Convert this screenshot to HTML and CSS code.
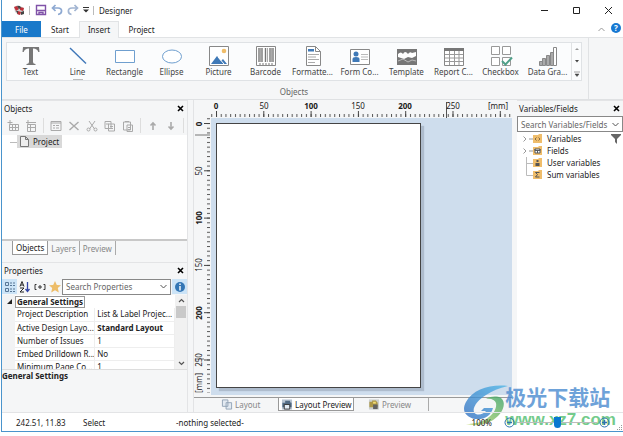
FILE: index.html
```html
<!DOCTYPE html>
<html lang="en">
<head>
<meta charset="utf-8">
<title>Designer</title>
<link rel="stylesheet" href="styles.css">
</head>
<body>
<div class="app">
  <header class="titlebar">
    <svg class="logo" width="12" height="12" viewBox="0 0 12 12"><path d="M1 3l4-2 6 3v5l-5 2-4-3z" fill="#ccc"/><path d="M1 3l3-1 2 3-3 2zM7 3l4 1-1 3-3-1zM5 7l3 1-1 3-3-1z" fill="#c0303a"/><path d="M4 2l3 0 1 2-2 1zM3 7l2 0 0 3zM8 8l3-1v3l-3 1z" fill="#444"/></svg>
    <span class="bar"></span>
    <button aria-label="Save"><svg width="12" height="12" viewBox="0 0 12 12" fill="none" stroke="#8052a8" stroke-width="1.4"><path d="M1.500 1.500h9v9h-9zM2 6.500h8M4 10.500V8.500h4v2"/></svg></button>
    <button class="undo" aria-label="Undo"><svg width="12" height="12" viewBox="0 0 12 12" fill="none" stroke="#8ea9d2" stroke-width="1.700"><path d="M4.500 1L1.500 4l3 3M2 4h5c5 0 4.500 6 0 6.500"/></svg></button>
    <button class="undo" aria-label="Redo"><svg width="12" height="12" viewBox="0 0 12 12" fill="none" stroke="#a2b5d2" stroke-width="1.700"><path d="M7.500 1l3 3-3 3M10 4H5C0 4 .5 10 4.500 10.500"/></svg></button>
    <button class="more" aria-label="Customize"><svg width="6" height="6" viewBox="0 0 6 6"><path d="M0 0h6v1H0zM0 2.500h6L3 5.500z" fill="#333"/></svg></button>
    <span class="bar"></span>
    <h1>Designer</h1>
    <div class="winbtns">
      <button aria-label="Minimize"><svg width="9" height="9" viewBox="0 0 9 9"><path d="M1 4.500h7" stroke="#222"/></svg></button>
      <button aria-label="Maximize"><svg width="9" height="9" viewBox="0 0 9 9"><path d="M1.500 1.500h6v6h-6z" fill="none" stroke="#222"/></svg></button>
      <button aria-label="Close"><svg width="9" height="9" viewBox="0 0 9 9"><path d="M1 1l7 7M8 1L1 8" stroke="#222"/></svg></button>
    </div>
  </header>

  <nav class="tabs">
    <button class="file">File</button><button>Start</button><button class="current">Insert</button><button>Project</button>
    <span class="grow"></span>
    <button class="collapse" aria-label="Collapse ribbon"><svg width="7" height="5" viewBox="0 0 7 5"><path d="M.5 4l3-3 3 3" fill="none" stroke="#999"/></svg></button>
    <button class="help" aria-label="Help">?</button>
  </nav>

  <section class="ribbon">
    <div class="group">
      <div class="gallery">
        <button><svg viewBox="0 0 20 20"><path d="M2 1h16l.5 5h-1.200Q16.500 2.500 12 2.500V16q0 2 2.500 2v1h-9v-1Q8 18 8 16V2.500Q3.500 2.500 2.700 6H1.500z" fill="#777"/></svg>Text</button>
        <button><svg viewBox="0 0 20 20"><path d="M2 2l16 15.500" stroke="#3e76b8" stroke-width="1.400"/></svg>Line</button>
        <button><svg viewBox="0 0 20 20"><path d="M.5 4.500h19v12H.5z" fill="#fff" stroke="#6f9fcf"/></svg>Rectangle</button>
        <button><svg viewBox="0 0 20 20"><ellipse cx="10" cy="10.500" rx="9.500" ry="6.500" fill="#fff" stroke="#6f9fcf"/></svg>Ellipse</button>
        <button><svg viewBox="0 0 20 20"><path d="M.5.5h19v19H.5z" fill="#fff" stroke="#888"/><circle cx="15" cy="5" r="2.300" fill="#f0bd69"/><path d="M2 18l6-8 4 5 2-2 4 5z" fill="#3f79b7"/><path d="M9 11l6 7" stroke="#fff"/></svg>Picture</button>
        <button><svg viewBox="0 0 20 20"><path d="M.5.5h19v19H.5z" fill="#fff" stroke="#888"/><path d="M3 2v14M6 2v14M9.500 2v14M14 2v14M17 2v14" stroke="#777" stroke-width="1.400"/><path d="M4.500 2v14M11.500 2v14M15.500 2v14" stroke="#aaa"/><path d="M3 18h15" stroke="#777" stroke-dasharray="2 1"/></svg>Barcode</button>
        <button><svg viewBox="0 0 20 20"><path d="M3.500.5h9l5 5v14h-14z" fill="#fff" stroke="#888"/><path d="M12.500.5v5h5" fill="none" stroke="#888"/><path d="M5 3h6v2.500H5z" fill="#3f79b7"/><path d="M5 8.500h11M5 11h8M5 13.500h11M5 16.500h7" stroke="#aaa"/></svg>Formatte...</button>
        <button><svg viewBox="0 0 20 20"><path d="M.5 3.500h19v15H.5z" fill="#fff" stroke="#888"/><circle cx="6" cy="8" r="2.500" fill="#3f79b7"/><path d="M2.500 16v-3q0-2 3.500-2t3.500 2v3z" fill="#3f79b7"/><path d="M11 8.500h7M11 11h7M11 13.500h7" stroke="#bbb"/></svg>Form Co...</button>
        <button><svg viewBox="0 0 20 20"><path d="M0 3h20v16H0z" fill="#777"/><path d="M1 11V8q3-3 5 0 2-4 5 0 2-3 4-1l4-1v4l-4 2-4-1-4 2z" fill="#fff"/><path d="M1 15l5-2 5 3 4-2 4 1" stroke="#bbb" fill="none"/></svg>Template</button>
        <button><svg viewBox="0 0 20 20"><path d="M.5 2.500h19v17H.5z" fill="#fff" stroke="#888"/><path d="M0 2h20v3H0z" fill="#777"/><path d="M1 8.500h18M1 12h18M1 15.500h18M5.500 5v14M10.500 5v14M15 5v14" stroke="#999"/></svg>Report C...</button>
        <button><svg viewBox="0 0 20 20"><path d="M.5.500h8v8h-8zM11.500.5h8v8h-8zM.5 11.500h8v8h-8zM11.500 11.500h8v8h-8z" fill="#fff" stroke="#999"/><path d="M11 15l3.500 3.500L21 11.500" fill="none" stroke="#4fa089" stroke-width="2"/></svg>Checkbox</button>
        <button><svg viewBox="0 0 20 20"><path d="M1.500 15.500h3v4h-3zM4.500 12.500h3v7h-3zM8.500 9.500h3v10h-3zM12.500 6.500h3v13h-3z" fill="#aaa" stroke="#888"/><path d="M15.500 1.500h3v18h-3z" fill="#fff" stroke="#888"/></svg>Data Gra...</button>
        <div class="scroller">
          <button aria-label="Up"><svg viewBox="0 0 6 6"><path d="M1 4l2-2 2 2z" fill="#999"/></svg></button>
          <button aria-label="Down"><svg viewBox="0 0 6 6"><path d="M1 2h4L3 4.500z" fill="#444"/></svg></button>
          <button aria-label="Expand"><svg viewBox="0 0 6 6"><path d="M0 1h6M1 3h4L3 5.500z" fill="#444" stroke="#444" stroke-width=".5"/></svg></button>
        </div>
      </div>
      <span class="caption">Objects</span>
    </div>
  </section>

  <main class="work">
    <div class="left">
      <section class="panel objects">
        <h2>Objects<button aria-label="Close panel"><svg width="7" height="7" viewBox="0 0 7 7"><path d="M1 1l5 5M6 1L1 6" stroke="#000" stroke-width="1.600"/></svg></button></h2>
        <div class="tools">
          <button aria-label="Insert table"><svg viewBox="0 0 12 12"><path d="M2.500 4.500h9v6h-9zM2 7.500h9M5.500 5v6M8.500 5v6M3 0v5M.5 2.500h5"/></svg></button>
          <button aria-label="Append table"><svg viewBox="0 0 12 12"><path d="M2.500 4.500h8v7h-8zM2 7.500h9M5.500 5v6M1 2.500h10M3 0v5"/></svg></button>
          <i></i>
          <button aria-label="Properties"><svg viewBox="0 0 12 12"><path d="M1 1.500h10v9H1zM1 3h10M3 5.500h2M6 5.500h3M3 8h2M6 8h3"/></svg></button>
          <button aria-label="Delete"><svg viewBox="0 0 12 12"><path d="M1.500 2l9 8M10.500 2l-9 8" stroke-width="1.400"/></svg></button>
          <button aria-label="Cut"><svg viewBox="0 0 12 12"><path d="M3 1l5.500 8M9 1L3.500 9"/><circle cx="2.500" cy="9.500" r="1.500"/><circle cx="9.500" cy="9.500" r="1.500"/></svg></button>
          <button aria-label="Copy"><svg viewBox="0 0 12 12"><path d="M1 1.500h6v7H1zM4.500 4h6v7h-6zM2 4h3M6 6.500h3M6 8.500h3"/></svg></button>
          <button aria-label="Paste"><svg viewBox="0 0 12 12"><path d="M1.500 2h7v8h-7zM5 5h5.500v6.500H5zM3 1.500h4M6 7.500h3M6 9.500h3"/></svg></button>
          <i></i>
          <button aria-label="Move up"><svg viewBox="0 0 12 12"><path d="M6 10V3M3.500 5.500L6 3l2.500 2.500" stroke-width="1.600"/></svg></button>
          <button aria-label="Move down"><svg viewBox="0 0 12 12"><path d="M6 2v7M3.500 6.500L6 9l2.500-2.500" stroke-width="1.600"/></svg></button>
          <i></i>
        </div>
        <div class="tree"><span class="branch"></span><button class="node"><svg width="9" height="11" viewBox="0 0 9 11"><path d="M.5.5h5l3 3v7h-8zM5.500.5v3h3" fill="#eee" stroke="#777"/></svg>Project</button></div>
        <div class="subtabs"><button class="current">Objects</button><button>Layers</button><button>Preview</button></div>
      </section>

      <section class="panel props">
        <h2>Properties<button aria-label="Close panel"><svg width="7" height="7" viewBox="0 0 7 7"><path d="M1 1l5 5M6 1L1 6" stroke="#000" stroke-width="1.600"/></svg></button></h2>
        <div class="filter">
          <button class="on" aria-label="Categorized"><svg viewBox="0 0 12 12" fill="none" stroke="#587796"><path d="M1.500 1.500h3v3h-3zM1.500 7.500h3v3h-3zM6 2h2M9 2h2M6 4.500h2M9 4.500h2M6 8h2M9 8h2M6 10.500h2M9 10.500h2"/></svg></button>
          <button aria-label="Sort alphabetically"><svg viewBox="0 0 12 12" fill="none" stroke="#222"><path d="M1 5.500l2-5 2 5M2 4h2M1 7h4l-4 4h4"/><path d="M8.500 1v9M6.500 8l2 2.500 2-2.500" stroke="#3345a5" stroke-width="1.300"/></svg></button>
          <button aria-label="Expand all"><svg viewBox="0 0 12 12" fill="none" stroke="#333"><path d="M2.500 3.500H1v5h1.500M9.500 3.500H11v5H9.500M4 6h4M6 4v4"/></svg></button>
          <button aria-label="Favorites"><svg viewBox="0 0 12 12"><path d="M6 0l1.800 4 4.200.3-3.200 2.800 1 4.400L6 9.200l-3.800 2.300 1-4.400L0 4.300 4.200 4z" fill="#edbd69"/></svg></button>
          <div class="combo"><input aria-label="Search Properties" placeholder="Search Properties"><svg width="7" height="5" viewBox="0 0 7 5"><path d="M.5 1l3 3 3-3" fill="none" stroke="#555"/></svg></div>
          <button class="on info" aria-label="Description"><svg viewBox="0 0 12 12"><circle cx="6" cy="6" r="5" fill="#3376b5"/><path d="M6 2.500v1.500M6 5v4.500" stroke="#fff" stroke-width="1.400"/></svg></button>
        </div>
        <div class="sheet">
          <table>
            <tr><td class="gut"><svg width="5" height="5" viewBox="0 0 5 5"><path d="M5 0v5H0z" fill="#222"/></svg></td><th colspan="2"><span>General Settings</span></th></tr>
            <tr><td class="gut"></td><td>Project Description</td><td>List &amp; Label Projec...</td></tr>
            <tr><td class="gut"></td><td>Active Design Layo...</td><td><b>Standard Layout</b></td></tr>
            <tr><td class="gut"></td><td>Number of Issues</td><td>1</td></tr>
            <tr><td class="gut"></td><td>Embed Drilldown R...</td><td>No</td></tr>
            <tr><td class="gut"></td><td>Minimum Page Co...</td><td>1</td></tr>
          </table>
          <div class="vscroll"><svg width="7" height="5" viewBox="0 0 7 5"><path d="M1 4l2.500-2.500L6 4" fill="none" stroke="#555" stroke-width="1.200"/></svg><span></span><svg width="7" height="5" viewBox="0 0 7 5"><path d="M1 1l2.500 2.500L6 1" fill="none" stroke="#555" stroke-width="1.200"/></svg></div>
        </div>
        <p class="desc">General Settings</p>
      </section>
    </div>

    <section class="center">
      <svg class="hruler" width="100%" height="18">
        <defs>
          <pattern id="hm" x="22" y="0" width="4.730" height="18" patternUnits="userSpaceOnUse"><path d="M.5 14v3" stroke="#555"/></pattern>
          <pattern id="hM" x="22" y="0" width="47.300" height="18" patternUnits="userSpaceOnUse"><path d="M.5 11v6" stroke="#444"/></pattern>
        </defs>
        <rect x="17" width="100%" height="18" fill="url(#hm)"/><rect x="17" width="100%" height="18" fill="url(#hM)"/>
        <path d="M252.500 2v16" stroke="#555"/>
        <g text-anchor="middle"><text class="b" x="22" y="9">0</text><text x="70" y="9">50</text><text class="b" x="117" y="9">100</text><text x="164" y="9">150</text><text class="b" x="211" y="9">200</text><text x="259" y="9">250</text><text x="304" y="9">[mm]</text></g>
      </svg>
      <div class="stage">
        <svg class="vruler" width="17" height="100%">
          <defs>
            <pattern id="vm" x="0" y="5" width="17" height="4.730" patternUnits="userSpaceOnUse"><path d="M13 .5h3" stroke="#555"/></pattern>
            <pattern id="vM" x="0" y="5" width="17" height="47.300" patternUnits="userSpaceOnUse"><path d="M10 .5h6" stroke="#444"/></pattern>
          </defs>
          <rect width="17" height="275" fill="url(#vm)"/><rect width="17" height="275" fill="url(#vM)"/>
          <path d="M1 17h15M1 241h9" stroke="#777"/>
          <g text-anchor="middle"><text class="b" transform="translate(8 6) rotate(-90)">0</text><text transform="translate(8 53) rotate(-90)">50</text><text class="b" transform="translate(8 100) rotate(-90)">100</text><text transform="translate(8 147) rotate(-90)">150</text><text class="b" transform="translate(8 195) rotate(-90)">200</text><text transform="translate(8 242) rotate(-90)">250</text><text transform="translate(8 265) rotate(-90)">[mm]</text></g>
        </svg>
        <div class="canvas"><div class="sheetpage"></div></div>
      </div>
      <div class="viewtabs">
        <button><svg viewBox="0 0 12 12"><path d="M1 1h6v7H1zM5 4h6v7H5z" fill="#e3eaf2" stroke="#91a2b5"/></svg>Layout</button>
        <button class="current"><svg viewBox="0 0 12 12"><path d="M.5.5h11v11H.5z" fill="#b9c5d2"/><path d="M1 4h3V2h5l1 2h1v5H1z" fill="#526b84"/><path d="M3 6h6v5H3z" fill="#e4edf6" stroke="#333"/></svg>Layout Preview</button>
        <button><svg viewBox="0 0 12 12"><path d="M.5.5h11v11H.5z" fill="#ccd0cf"/><path d="M1 3h3V1.500h4L10 4v5H1z" fill="#ad9745"/><path d="M5 6h5v5H5z" fill="#626262"/><path d="M5 3h3v2H5z" fill="#f2dd75"/></svg>Preview</button>
      </div>
    </section>

    <aside class="right">
      <h2>Variables/Fields<button aria-label="Close panel"><svg width="7" height="7" viewBox="0 0 7 7"><path d="M1 1l5 5M6 1L1 6" stroke="#000" stroke-width="1.600"/></svg></button></h2>
      <div class="combo"><input aria-label="Search Variables/Fields" placeholder="Search Variables/Fields"><svg width="7" height="5" viewBox="0 0 7 5"><path d="M.5 1l3 3 3-3" fill="none" stroke="#555"/></svg></div>
      <ul>
        <li><svg width="26" height="12" viewBox="0 0 26 12"><path d="M2.500 3.500l2.500 2.500-2.500 2.500M8 6h4" fill="none" stroke="#999"/><path d="M12 2h5l1-1h3v9h-9z" fill="#efbd6b"/><path d="M15.500 4.500L14 6l1.500 1.500M17.500 4.500L19 6l-1.500 1.500" fill="none" stroke="#856a42"/></svg>Variables<button aria-label="Filter"><svg width="10" height="10" viewBox="0 0 10 10"><path d="M0 0h10v1L6 5v5L4 8V5L0 1z" fill="#666"/></svg></button></li>
        <li><svg width="26" height="12" viewBox="0 0 26 12"><path d="M2.500 3.500l2.500 2.500-2.500 2.500M8 6h4" fill="none" stroke="#999"/><path d="M12 2h5l1-1h3v9h-9z" fill="#efbd6b"/><path d="M14 4h5v4h-5z" fill="#fff"/><path d="M14 4h5v1.500h-5zM14 4v4h5V4M16.500 5v3" fill="none" stroke="#55595f"/></svg>Fields</li>
        <li><svg width="26" height="12" viewBox="0 0 26 12"><path d="M5.500 0v12M5 6.500h7" fill="none" stroke="#bbb"/><path d="M12 2h5l1-1h3v9h-9z" fill="#efbd6b"/><path d="M15.500 3h2v2h-2zM14.500 6h4v3h-4z" fill="#555"/></svg>User variables</li>
        <li><svg width="26" height="12" viewBox="0 0 26 12"><path d="M5.500 0v6.500H12" fill="none" stroke="#bbb"/><path d="M12 2h5l1-1h3v9h-9z" fill="#efbd6b"/><path d="M18.500 3.500h-4l2 2-2 2.500h4" fill="none" stroke="#555"/></svg>Sum variables</li>
      </ul>
    </aside>
  </main>

  <footer class="status">
    <span class="pos">242.51, 11.83</span><span class="mode">Select</span><span class="sel">-nothing selected-</span>
    <span class="pct">100%</span>
    <button aria-label="Zoom out"><svg width="11" height="11" viewBox="0 0 11 11" fill="none" stroke="#2e73ae"><circle cx="5.500" cy="5.500" r="4.500"/><path d="M3 5.500h5" stroke-width="1.500"/></svg></button>
    <input type="range" aria-label="Zoom">
    <button aria-label="Zoom in"><svg width="11" height="11" viewBox="0 0 11 11" fill="none" stroke="#2e73ae"><circle cx="5.500" cy="5.500" r="4.500"/><path d="M3 5.500h5M5.500 3v5" stroke-width="1.500"/></svg></button>
    <svg class="grip" width="7" height="7" viewBox="0 0 7 7"><path d="M5 1h1v1H5zM3 3h1v1H3zM5 3h1v1H5zM1 5h1v1H1zM3 5h1v1H3zM5 5h1v1H5z" fill="#999"/></svg>
  </footer>
</div>

<div class="watermark">
  <svg width="46" height="42" viewBox="0 0 46 42">
    <defs><linearGradient id="wb" x1="0" y1="1" x2="1" y2="0"><stop offset="0" stop-color="#326fc1"/><stop offset="1" stop-color="#51b8e8"/></linearGradient><linearGradient id="wg" x1="0" y1="1" x2="1" y2="0"><stop offset="0" stop-color="#c4d86a"/><stop offset="1" stop-color="#3da568"/></linearGradient></defs>
    <path d="M45 1C28-1 10 4 3 17c-5 9 0 15 9 17 9 1 16-3 18-11h-9l-3 3h5c-3 4-10 5-12 1-2-5 5-13 12-17C29 6 36 3 45 1z" fill="url(#wb)"/>
    <path d="M23 14c5-3 11-3 15-1 5 4 3 12-3 18-8 8-20 11-32 8 9 0 17-2 23-7 5-4 8-9 7-14-1-3-5-5-10-4z" fill="url(#wg)"/>
  </svg>
  <div><strong lang="zh">极光下载站</strong><span>www.xz7.com</span></div>
</div>
</body>
</html>
```
FILE: styles.css
```css
* { box-sizing: border-box; }
body { margin: 0; background: #fff; color: #222; font: 8px/13px "Noto Sans", "Open Sans", sans-serif; overflow: hidden; }
button { border: 0; padding: 0; margin: 0; background: none; color: inherit; font: inherit; }
svg { display: block; flex: none; }
h1, h2, p, ul { margin: 0; padding: 0; font: inherit; }
input { font: inherit; }
.app { display: flex; flex-direction: column; height: calc(100vh - 4px); margin-left: 1px; border-left: 1px solid #4a94cc; border-bottom: 1px solid #4a94cc; }
.grow { flex: 1; }

.titlebar { display: flex; align-items: center; height: 20px; padding: 0 10px 0 11px; flex: none; }
.titlebar .bar { width: 1px; height: 9px; margin: 0 5px 0 4px; background: #bbb; }
.titlebar .undo { margin-left: 4px; }
.titlebar .more { margin-left: 4px; }
.titlebar h1 { flex: 1; }
.winbtns { display: flex; gap: 23px; }

.tabs { display: flex; height: 17px; flex: none; align-items: stretch; border-bottom: 1px solid #e1e3e5; margin-top: 1px; }
.tabs button { width: 38px; height: 16px; }
.tabs .file { width: 39px; background: #1979ca; color: #fff; }
.tabs .current { width: 40px; background: #f5f6f7; height: 17px; border: 1px solid #e1e3e5; border-bottom: 0; line-height: 14px; }
.tabs button:nth-child(4) { width: 45px; }
.tabs .collapse { width: 8px; margin-right: 6px; display: grid; place-items: center; }
.tabs .help { width: 10px; height: 10px; margin: 2px 2px 0 0; border-radius: 50%; background: #1678d2; color: #fff; font-weight: bold; line-height: 10px; }

.ribbon { display: flex; flex: none; height: 62px; background: #f5f6f7; border-bottom: 1px solid #dfe1e3; }
.group { display: flex; flex-direction: column; padding: 4px 6px 0 4px; border-right: 1px solid #e0e2e4; }
.gallery { display: flex; height: 43px; background: #fbfcfd; border: 1px solid #dfe2e5; }
.gallery > button { display: flex; flex-direction: column; align-items: center; width: 47px; padding-top: 3px; line-height: 12px; white-space: nowrap; color: #444; }
.gallery > button:nth-child(2) { background: linear-gradient(#bbb, #bbb) 50% 100% / 10px 1px no-repeat; }
.gallery > button svg { width: 20px; height: 20px; overflow: visible; }
.scroller { display: flex; flex-direction: column; width: 10px; border-left: 1px solid #e0e2e4; }
.scroller button { flex: 1; display: grid; place-items: center; }
.scroller svg { width: 6px; height: 6px; }
.caption { text-align: center; padding-top: 4px; line-height: 14px; color: #666; }

.work { display: grid; grid-template-columns: 186px minmax(0, 1fr) 106px; flex: 1; min-height: 0; background: #f5f6f7; }
.left { display: flex; flex-direction: column; min-height: 0; border-right: 1px solid #e3e4e6; }
h2 { display: flex; justify-content: space-between; align-items: center; height: 15px; padding: 0 3px 0 2px; flex: none; }
.objects { display: flex; flex-direction: column; height: 162px; border-top: 1px solid #e3e4e6; flex: none; }
.tools { display: flex; align-items: center; height: 19px; flex: none; padding-left: 5px; gap: 6px; }
.tools svg { width: 12px; height: 12px; fill: none; stroke: #aaa; }
.tools i { width: 1px; height: 15px; background: #ddd; }
.tree { flex: 1; display: flex; align-items: flex-start; background: #fff; padding-left: 8px; border-bottom: 2px solid #c8c8c8; }
.branch { width: 7px; height: 1px; margin-top: 7px; background: #bbb; }
.node { display: flex; align-items: center; gap: 4px; height: 13px; padding: 0 3px; background: #d9d9d9; }
.subtabs { display: flex; height: 21px; flex: none; padding-left: 10px; align-items: flex-start; color: #888; }
.subtabs button { height: 14px; padding: 0 3px; border-right: 1px solid #aaa; }
.subtabs .current { background: #fff; color: #222; border: 1px solid #999; border-top: 0; }
.props { display: flex; flex-direction: column; flex: 1; min-height: 0; border-top: 1px solid #e3e4e6; }
.filter { display: flex; height: 17px; flex: none; align-items: center; }
.filter > button { display: grid; place-items: center; width: 15px; height: 15px; }
.filter > button svg { width: 12px; height: 12px; }
.filter .on { background: #cce4f7; }
.combo { display: flex; align-items: center; height: 16px; border: 1px solid #888; background: #fff; padding-right: 3px; flex: none; }
.combo input { flex: 1; width: 0; min-width: 0; padding: 0 3px; border: 0; background: none; outline: 0; }
.combo input::placeholder { color: #666; opacity: 1; }
.filter .combo { flex: 1; margin-right: 1px; }
.sheet { display: flex; flex: 1; min-height: 0; overflow: hidden; background: #fff; border-bottom: 1px solid #ddd; }
table { flex: 1; align-self: flex-start; table-layout: fixed; width: 0; border-collapse: collapse; }
td, th { height: 13px; padding: 0 0 0 2px; line-height: 12px; border-bottom: 1px solid #eee; border-right: 1px solid #eee; text-align: left; white-space: nowrap; overflow: hidden; }
td:nth-child(2) { width: 79px; }
.gut { width: 13px; background: #f2f3f4; padding-left: 5px; border: 0; }
th { padding-left: 0; border: 0; }
th span { display: inline-block; padding: 0 1px; border: 1px solid #999; line-height: 10px; }
.vscroll { width: 12px; display: flex; flex-direction: column; align-items: center; justify-content: space-between; background: #f1f1f1; padding: 3px 0; }
.vscroll span { width: 10px; height: 12px; background: #c9c9c9; margin: 3px 0 auto; }
.desc { height: 42px; flex: none; font-weight: bold; line-height: 12px; }

.center { display: flex; flex-direction: column; min-width: 0; min-height: 0; margin: 0 5px; border-left: 1px solid #e2e3e5; }
.hruler, .vruler { flex: none; }
.center text { font-size: 8px; fill: #222; }
.center text.b { font-weight: bold; }
.stage { flex: 1; display: flex; min-height: 0; }
.canvas { flex: 1; min-width: 0; background: #cedded; padding: 5px; }
.sheetpage { height: calc(100% - 2px); width: 70.5%; background: #fff; border: 1px solid #444; box-shadow: 3px 3px 1px #aebccd; }
.viewtabs { display: flex; height: 15px; flex: none; border-top: 1px solid #999; color: #888; margin-top: 2px; }
.viewtabs button { display: flex; align-items: center; gap: 2px; height: 13px; padding-left: 14px; }
.viewtabs button:first-child { width: 84px; padding-left: 27px; }
.viewtabs button:last-child { width: 75px; border-right: 1px solid #aaa; }
.viewtabs .current { width: 76px; padding-left: 2px; background: #fff; color: #222; border: 1px solid #999; border-top: 0; }
.viewtabs svg { width: 12px; height: 11px; }
.right { background: #fff; border-top: 1px solid #e3e4e6; min-width: 0; }
.right h2 { background: #f5f6f7; }
ul { list-style: none; padding-top: 1px; }
li { display: flex; align-items: center; height: 12px; line-height: 12px; padding-left: 4px; }
li button { margin: 0 2px 0 auto; }

.status { position: relative; z-index: 1; display: flex; align-items: center; height: 19px; flex: none; border-top: 1px solid #e3e4e6; padding-left: 14px; }
.pos { width: 67px; }
.mode { width: 93px; }
.sel { flex: 1; }
.pct { margin-right: 12px; }
.status input { appearance: none; width: 80px; height: 11px; margin: 0 2px; background: linear-gradient(#bbb, #bbb) 0 5px / 100% 1px no-repeat; }
.status input::-webkit-slider-thumb { appearance: none; width: 7px; height: 11px; background: #0878d0; border-radius: 0 0 4px 4px; }
.grip { align-self: flex-end; margin-left: 6px; }

.watermark { position: absolute; right: 7px; bottom: 8px; display: flex; align-items: flex-start; pointer-events: none; opacity: .8; }
.watermark > svg { margin-right: -4px; }
.watermark div { display: flex; flex-direction: column; gap: 4px; }
.watermark strong { font: bold 21px/22px "Noto Sans CJK SC", sans-serif; color: #4a8bd0; }
.watermark span { font: bold 17px/17px "Liberation Sans", sans-serif; color: #52bf70; }
```
